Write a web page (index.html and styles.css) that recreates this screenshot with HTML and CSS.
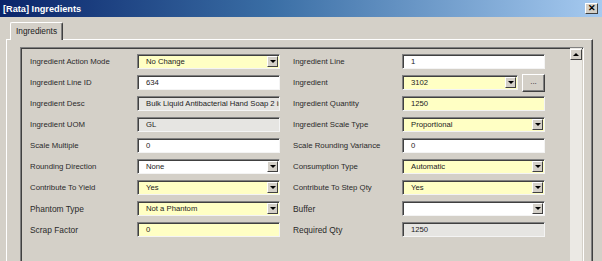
FILE: index.html
```html
<!DOCTYPE html>
<html lang="en">
<head>
<meta charset="UTF-8" />
<title>[Rata] Ingredients</title>
<link rel="stylesheet" href="styles.css">
</head>
<body>

<div class="window">
  <div class="titlebar">
    <span class="title">[Rata] Ingredients</span>
    <span class="close">&#x2715;</span>
  </div>

  <div class="client">
    <div class="tabs">
      <div class="tab">Ingredients</div>
    </div>

    <div class="panel">
      <div class="scroller">
        <div class="form">
          <div class="lbl">Ingredient Action Mode</div>
          <div class="fld yellow combo"><span>No Change</span><i class="arrow"></i></div>
          <div class="lbl r">Ingredient Line</div>
          <div class="fld"><span>1</span></div>

          <div class="lbl">Ingredient Line ID</div>
          <div class="fld"><span>634</span></div>
          <div class="lbl r">Ingredient</div>
          <div class="lookup">
            <div class="fld yellow combo"><span>3102</span><i class="arrow"></i></div>
            <div class="dots">...</div>
          </div>

          <div class="lbl">Ingredient Desc</div>
          <div class="fld gray"><span>Bulk Liquid Antibacterial Hand Soap 2 in 1</span></div>
          <div class="lbl r">Ingredient Quantity</div>
          <div class="fld yellow"><span>1250</span></div>

          <div class="lbl">Ingredient UOM</div>
          <div class="fld gray"><span>GL</span></div>
          <div class="lbl r">Ingredient Scale Type</div>
          <div class="fld yellow combo"><span>Proportional</span><i class="arrow"></i></div>

          <div class="lbl">Scale Multiple</div>
          <div class="fld"><span>0</span></div>
          <div class="lbl r">Scale Rounding Variance</div>
          <div class="fld"><span>0</span></div>

          <div class="lbl">Rounding Direction</div>
          <div class="fld combo"><span>None</span><i class="arrow"></i></div>
          <div class="lbl r">Consumption Type</div>
          <div class="fld yellow combo"><span>Automatic</span><i class="arrow"></i></div>

          <div class="lbl">Contribute To Yield</div>
          <div class="fld yellow combo"><span>Yes</span><i class="arrow"></i></div>
          <div class="lbl r">Contribute To Step Qty</div>
          <div class="fld yellow combo"><span>Yes</span><i class="arrow"></i></div>

          <div class="lbl big">Phantom Type</div>
          <div class="fld yellow combo"><span>Not a Phantom</span><i class="arrow"></i></div>
          <div class="lbl r big">Buffer</div>
          <div class="fld combo"><span></span><i class="arrow"></i></div>

          <div class="lbl big">Scrap Factor</div>
          <div class="fld yellow"><span>0</span></div>
          <div class="lbl r big">Required Qty</div>
          <div class="fld gray"><span>1250</span></div>
        </div>

        <div class="vscroll">
          <div class="up"><i></i></div>
        </div>
      </div>
    </div>
  </div>
</div>

</body>
</html>
```

FILE: styles.css
```css
body { margin: 0; background: #d4d0c8; font-family: "Liberation Sans", Arial, sans-serif; }

.window { width: 602px; height: 261px; overflow: hidden; background: #d4d0c8; }

.titlebar {
  height: 17px; display: flex; align-items: center; justify-content: space-between;
  padding-left: 3px; box-sizing: border-box;
  background: linear-gradient(to right, #0a246a 0%, #3a6ea5 45%, #a6caf0 100%);
}
.title { color: #fff; font-weight: bold; font-size: 9.2px; }
.close {
  width: 13px; height: 11px; margin-right: 4px; box-sizing: border-box;
  background: #d4d0c8; color: #000; font-size: 9px; font-weight: bold; line-height: 9px;
  text-align: center; border: 1px solid; border-color: #fff #404040 #404040 #fff;
}

.client { padding: 5px 9px 0 6px; }

.tabs { display: flex; padding-left: 4px; position: relative; z-index: 1; }
.tab {
  width: 53px; height: 18px; box-sizing: border-box; padding: 3px 0 0 5px;
  font-size: 8.3px; color: #222; background: #d4d0c8;
  border: 1px solid; border-bottom: none; border-color: #fff #404040 #fff #fff;
  border-radius: 2px 2px 0 0; box-shadow: inset -1px 0 #808080;
}

.panel {
  margin-top: -1px; height: 240px; box-sizing: border-box;
  padding: 7px 8px 0 13px;
  border: 1px solid; border-color: #fff #404040 #404040 #fff;
  box-shadow: inset -1px 0 #808080;
}

.scroller {
  display: flex; height: 100%; box-sizing: border-box;
  border: 1px solid; border-color: #808080 #fff #fff #808080;
  box-shadow: inset 1px 1px #404040;
}

.form {
  flex: 1; padding: 6px 0 0 9px;
  display: grid; grid-template-columns: 107px 143px 122px 143px;
  grid-auto-rows: 15px; row-gap: 6px; align-items: center;
}

.lbl { font-size: 7.8px; color: #2a2a2a; white-space: nowrap; }
.lbl.big { font-size: 8.4px; }
.lbl.r { padding-left: 13px; }

.fld {
  height: 15px; box-sizing: border-box; display: flex; align-items: center;
  background: #fff; overflow: hidden;
  border: 1px solid; border-color: #808080 #f4f4f4 #f4f4f4 #808080;
  box-shadow: inset 1px 1px #404040;
  font-size: 7.7px; color: #222; white-space: nowrap;
}
.fld span { flex: 1; padding-left: 8px; overflow: hidden; }
.fld.yellow { background: #ffffc4; }
.fld.gray { background: #e6e5e2; }

.arrow {
  width: 11px; height: 11px; margin-right: 1px; box-sizing: border-box; flex: none;
  background: #d4d0c8; display: flex; align-items: center; justify-content: center;
  border: 1px solid; border-color: #fff #404040 #404040 #fff;
}
.arrow::after {
  content: ""; border-top: 3px solid #000;
  border-left: 3px solid transparent; border-right: 3px solid transparent;
}

.lookup { display: flex; align-items: center; gap: 4px; }
.lookup .fld { width: 116px; }
.dots {
  width: 23px; height: 18px; box-sizing: border-box; flex: none;
  font-size: 8px; text-align: center; line-height: 14px; color: #222;
  border: 1px solid; border-color: #fff #404040 #404040 #fff;
  box-shadow: inset -1px -1px #808080;
}

.vscroll {
  width: 12px; flex: none; margin-right: 1px;
  background: #ebe9e4;
}
.up {
  height: 11px; box-sizing: border-box; margin-top: 1px;
  display: flex; align-items: center; justify-content: center;
  background: #d4d0c8; border: 1px solid; border-color: #fff #404040 #404040 #fff;
}
.up i {
  border-bottom: 3px solid #000;
  border-left: 3px solid transparent; border-right: 3px solid transparent;
}
```
